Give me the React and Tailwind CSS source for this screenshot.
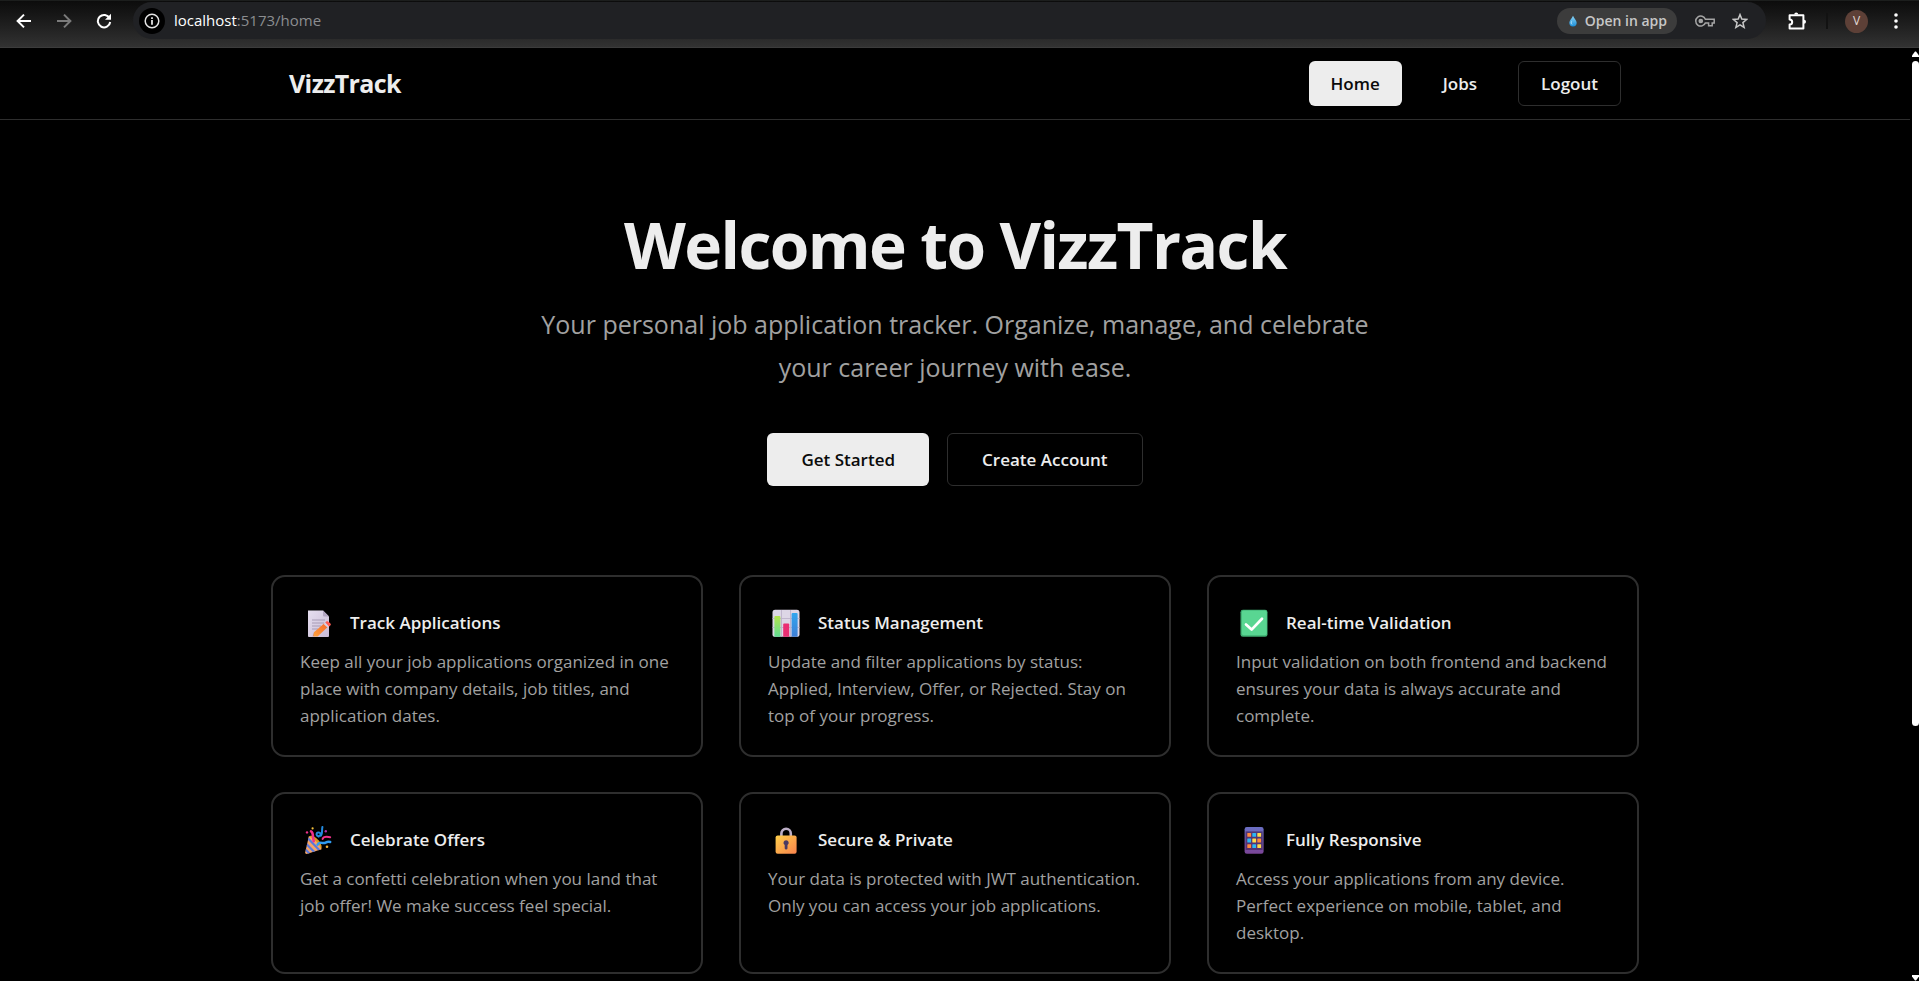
import React from "react";

function ArrowIcon({ className }) {
  return (
    <svg viewBox="0 0 16 16" className={className} fill="none" stroke="currentColor" strokeWidth="2" aria-hidden="true">
      <path d="M15 8H2M8 1.6 1.6 8 8 14.4" />
    </svg>
  );
}

function ReloadIcon() {
  return (
    <svg viewBox="0 0 16 16" className="size-4" aria-hidden="true">
      <path d="M13.6 5.4A6.2 6.2 0 1 0 14.2 9" fill="none" stroke="currentColor" strokeWidth="2" />
      <path d="M15 .8v6H9z" fill="currentColor" />
    </svg>
  );
}

function InfoIcon() {
  return (
    <svg viewBox="0 0 16 16" className="size-4" aria-hidden="true">
      <circle cx="8" cy="8" r="6.8" fill="none" stroke="currentColor" strokeWidth="1.5" />
      <path d="M7.1 7h1.8v4.8H7.1zM7.1 4.2h1.8V6H7.1z" fill="currentColor" />
    </svg>
  );
}

function DropIcon() {
  return (
    <svg viewBox="0 0 10 14" className="h-3 w-2" aria-hidden="true">
      <defs>
        <linearGradient id="drop" x1="0" y1="0" x2="0" y2="1">
          <stop offset="0" stopColor="#8fd6f7" />
          <stop offset="1" stopColor="#1b8fd8" />
        </linearGradient>
      </defs>
      <path d="M5 .3C6 3 9.6 6 9.6 9.2A4.6 4.6 0 0 1 .4 9.2C.4 6 4 3 5 .3z" fill="url(#drop)" />
      <path d="M3.2 7.5c-.8 1.6-.4 3 .6 3.8" stroke="#d6f1ff" fill="none" />
    </svg>
  );
}

function KeyIcon() {
  return (
    <svg viewBox="0 0 20 12" className="h-3 w-5" fill="none" stroke="currentColor" strokeWidth="1.5" aria-hidden="true">
      <path d="M10.4 4.2A5 5 0 1 0 10.4 7.9H13.6V10.8H17.2V7.9H19.2V4.2z" />
      <circle cx="5.8" cy="6" r="1.6" fill="currentColor" />
    </svg>
  );
}

function StarIcon() {
  return (
    <svg viewBox="0 0 16 16" className="size-4" fill="none" stroke="currentColor" strokeWidth="1.5" aria-hidden="true">
      <path d="M8 1.6l1.8 4.5 4.8.4-3.7 3.1 1.2 4.8L8 11.8l-4.1 2.6 1.2-4.8L1.4 6.5l4.8-.4z" />
    </svg>
  );
}

function PuzzleIcon() {
  return (
    <svg viewBox="0 0 18 18" className="size-[18px]" aria-hidden="true">
      <path
        d="M1.6 3.2H15.4V16.6H1.6V12.6A2.4 2.4 0 0 0 1.6 7.4z"
        fill="none"
        stroke="currentColor"
        strokeWidth="2"
        strokeLinejoin="round"
      />
      <path d="M6.2 2.6a2 2 0 0 1 4 0zM16 7.8a2 2 0 0 1 0 4z" fill="currentColor" />
    </svg>
  );
}

function DotsIcon() {
  return (
    <svg viewBox="0 0 4 16" className="h-4 w-1" fill="currentColor" aria-hidden="true">
      <circle cx="2" cy="2" r="1.8" />
      <circle cx="2" cy="8" r="1.8" />
      <circle cx="2" cy="14" r="1.8" />
    </svg>
  );
}

function MemoIcon() {
  return (
    <svg viewBox="0 0 28 28" className="size-7" aria-hidden="true">
      <defs>
        <linearGradient id="memo" x1="0" y1="0" x2="1" y2="1">
          <stop offset="0" stopColor="#e6dff0" />
          <stop offset="1" stopColor="#c9bbd6" />
        </linearGradient>
        <linearGradient id="pencil" x1="0" y1="1" x2="1" y2="0">
          <stop offset="0" stopColor="#ffa23c" />
          <stop offset="1" stopColor="#f4672c" />
        </linearGradient>
      </defs>
      <path d="M4 1.5h15l6 6V27a.9.9 0 0 1-.9.9H4.9A.9.9 0 0 1 4 27z" fill="url(#memo)" />
      <path d="M19 1.5l6 6h-5a1 1 0 0 1-1-1z" fill="#b3a6c2" />
      <path d="M8 11h13M8 14h12M8 17h9M8 20h6" stroke="#a79bb5" strokeWidth="1.1" />
      <path d="M8.6 27.6l1.4-4.4 3.2 3.3z" fill="#c98a7c" />
      <path d="M10 23.2L20.6 14l3.6 3.6L13.6 27.4l-4 .2z" fill="url(#pencil)" />
      <path d="M19.6 14.9l1.8-1.6 3.8 3.6-1.8 1.7z" fill="#d9cfe4" />
      <path d="M21.2 13.4l1.4-1.1c1-.8 4.9 2.4 4.2 3.7l-1.6 1.4z" fill="#ff5b53" />
    </svg>
  );
}

function ChartIcon() {
  return (
    <svg viewBox="0 0 28 28" className="size-7" aria-hidden="true">
      <defs>
        <linearGradient id="bar-green" x1="0" y1="0" x2="0" y2="1">
          <stop offset="0" stopColor="#b4e34d" />
          <stop offset="1" stopColor="#5fdd92" />
        </linearGradient>
        <linearGradient id="bar-blue" x1="0" y1="0" x2="0" y2="1">
          <stop offset="0" stopColor="#31a6ee" />
          <stop offset="1" stopColor="#3f7fd6" />
        </linearGradient>
      </defs>
      <rect x=".5" y=".8" width="27" height="27" rx="2.6" fill="#ddd6e6" />
      <path d="M9.5 1v26.5M18.5 1v26.5M.5 9.5h27M.5 18.5h27" stroke="#bcb2c9" strokeWidth=".9" />
      <path d="M2.4 8a1 1 0 0 1 1-1h4a1 1 0 0 1 1 1v19.8H3.1a1 1 0 0 1-.7-.7z" fill="url(#bar-green)" />
      <path d="M11.2 15.5a1 1 0 0 1 1-1h4a1 1 0 0 1 1 1v12.3h-6z" fill="#ea2e73" />
      <path d="M19.6 5a1 1 0 0 1 1-1h4a1 1 0 0 1 1 1v22.4l-.9.4h-5.1z" fill="url(#bar-blue)" />
    </svg>
  );
}

function CheckIcon() {
  return (
    <svg viewBox="0 0 28 28" className="size-7" aria-hidden="true">
      <rect x=".5" y=".8" width="27" height="27" rx="2.4" fill="#3fae72" />
      <rect x="1.8" y="1.6" width="25" height="24.6" rx="1.8" fill="#59d692" />
      <path d="M6 15.4l5.6 5.2L22 9.8" fill="none" stroke="#fff" strokeWidth="2.7" strokeLinecap="round" strokeLinejoin="round" />
    </svg>
  );
}

function PartyIcon() {
  return (
    <svg viewBox="0 0 28 28" className="size-7" aria-hidden="true">
      <defs>
        <clipPath id="cone">
          <path d="M4.8 10.6c5 1.6 9.6 6 12.6 12.6L3.6 27.8c-2 .6-3-.6-2.2-2.4z" />
        </clipPath>
      </defs>
      <path d="M4.8 10.6c3.6-3.6 15 6 12.6 12.6-3 1.8-12.6-7-12.6-12.6z" fill="#d9981f" />
      <g clipPath="url(#cone)">
        <path d="M0 9h20v20H0z" fill="#f5a566" />
        <path d="M3.4 11.8l13 13.4M2 17.4l10 10.4M1 23l5 5" stroke="#5a78dc" strokeWidth="2.2" />
      </g>
      <path d="M7 5.4c3 1.4 1.2 5.4 2.8 9.8" fill="none" stroke="#f0318a" strokeWidth="2.5" strokeLinecap="round" />
      <path d="M14.6 10.6c-3.2-1-2.4-5 .8-4 2 .8 1 3.6-.4 3.4M16.8 9.6c2-1.6.8-5.4 1.6-8.6" fill="none" stroke="#2289dd" strokeWidth="2" strokeLinecap="round" />
      <path d="M13.6 18.6c2-4 5-.2 8-2 1.8-1 3.2-1 4.6-.6" fill="none" stroke="#2f9bf0" strokeWidth="2.5" strokeLinecap="round" />
      <path d="M18.6 13c.6-2.4 3-2.6 7.6-1.8" fill="none" stroke="#f0318a" strokeWidth="2" strokeLinecap="round" />
      <circle cx="8.6" cy="2.4" r="1.1" fill="#f7c23c" />
      <circle cx="3" cy="6.4" r="1.2" fill="#f0318a" />
      <circle cx="21.8" cy="5.2" r="1.2" fill="#b02fa8" />
      <circle cx="23" cy="20.8" r="1.3" fill="#f0b13c" />
    </svg>
  );
}

function LockIcon() {
  return (
    <svg viewBox="0 0 28 28" className="size-7" aria-hidden="true">
      <defs>
        <linearGradient id="lock" x1="0" y1="0" x2="1" y2="1">
          <stop offset="0" stopColor="#ffcf4a" />
          <stop offset="1" stopColor="#f8824c" />
        </linearGradient>
      </defs>
      <path d="M9.4 11V7.4a4.7 4.7 0 0 1 9.4 0V11" fill="none" stroke="#bcaec6" strokeWidth="2.6" />
      <rect x="3.6" y="9.6" width="21" height="18.2" rx="2" fill="url(#lock)" />
      <path d="M14.1 14.2a2.6 2.6 0 0 1 1.4 4.8v3.2a1.4 1.4 0 0 1-2.8 0V19a2.6 2.6 0 0 1 1.4-4.8z" fill="#4a3a63" />
    </svg>
  );
}

const appTiles = [
  [8.2, 8, "#ff8a3c"], [13.2, 8, "#2cb7f5"], [18.2, 8, "#ffd94a"],
  [8.2, 13.6, "#2cb7f5"], [13.2, 13.6, "#ffd94a"], [18.2, 13.6, "#ff8a3c"],
  [8.2, 19.2, "#ff8a3c"], [13.2, 19.2, "#2cb7f5"], [18.2, 19.2, "#ffd94a"],
];

function PhoneIcon() {
  return (
    <svg viewBox="0 0 28 28" className="size-7" aria-hidden="true">
      <defs>
        <linearGradient id="phone" x1="0" y1="0" x2="0" y2="1">
          <stop offset="0" stopColor="#6b6fc4" />
          <stop offset="1" stopColor="#7a4597" />
        </linearGradient>
        <linearGradient id="screen" x1="1" y1="0" x2="0" y2="1">
          <stop offset="0" stopColor="#4b3a78" />
          <stop offset="1" stopColor="#5a2f6e" />
        </linearGradient>
      </defs>
      <rect x="4.6" y="1" width="19" height="26.8" rx="2.2" fill="url(#phone)" />
      <rect x="5.6" y="5.4" width="17" height="18.6" fill="url(#screen)" />
      {appTiles.map(([x, y, fill]) => (
        <rect key={`${x}-${y}`} x={x - 0.9} y={y - 1} width="3.8" height="3.8" rx=".5" fill={fill} />
      ))}
    </svg>
  );
}

const features = [
  {
    title: "Track Applications",
    Icon: MemoIcon,
    text: "Keep all your job applications organized in one place with company details, job titles, and application dates.",
  },
  {
    title: "Status Management",
    Icon: ChartIcon,
    text: "Update and filter applications by status: Applied, Interview, Offer, or Rejected. Stay on top of your progress.",
  },
  {
    title: "Real-time Validation",
    Icon: CheckIcon,
    text: "Input validation on both frontend and backend ensures your data is always accurate and complete.",
  },
  {
    title: "Celebrate Offers",
    Icon: PartyIcon,
    text: "Get a confetti celebration when you land that job offer! We make success feel special.",
  },
  {
    title: "Secure & Private",
    Icon: LockIcon,
    text: "Your data is protected with JWT authentication. Only you can access your job applications.",
  },
  {
    title: "Fully Responsive",
    Icon: PhoneIcon,
    text: "Access your applications from any device. Perfect experience on mobile, tablet, and desktop.",
  },
];

function BrowserBar() {
  return (
    <div className="flex h-12 shrink-0 items-start border-t border-b border-t-[#1c1e1d] border-b-[#3c3c3c] bg-linear-to-b from-[#0c0c0c] to-[#323232] pt-px">
      <div className="flex h-[38px] w-[133px] shrink-0 items-center gap-6 pl-4 text-white">
        <button type="button" aria-label="Back">
          <ArrowIcon className="size-4" />
        </button>
        <button type="button" aria-label="Forward" className="text-[#7b7b7b]">
          <ArrowIcon className="size-4 rotate-180" />
        </button>
        <button type="button" aria-label="Reload">
          <ReloadIcon />
        </button>
      </div>
      <div className="flex h-[37px] min-w-0 grow items-center rounded-full bg-[#202124] pr-[18px] pl-[6px]">
        <button type="button" aria-label="Site information" className="flex size-[26px] items-center justify-center rounded-full bg-black text-[#e3e3e3]">
          <InfoIcon />
        </button>
        <label htmlFor="address" className="pl-[9px] text-[15px] text-white">
          localhost
        </label>
        <input
          id="address"
          type="text"
          defaultValue=":5173/home"
          className="min-w-0 grow bg-transparent text-[15px] text-[#8b8d90] outline-none"
        />
        <button type="button" className="flex h-[26px] items-center gap-2 rounded-full bg-[#3c3c3c] pr-[10px] pl-3 text-sm font-semibold text-[#c7c7c7]">
          <DropIcon />
          Open in app
        </button>
        <button type="button" aria-label="Passwords" className="ml-[18px] text-[#a5a5a5]">
          <KeyIcon />
        </button>
        <button type="button" aria-label="Bookmark this page" className="ml-[17px] text-[#c7c7c7]">
          <StarIcon />
        </button>
      </div>
      <div className="flex h-[38px] w-[153px] shrink-0 items-center pl-[22px] text-white">
        <button type="button" aria-label="Extensions">
          <PuzzleIcon />
        </button>
        <span className="ml-5 h-4 w-0.5 bg-[#121212]" />
        <button type="button" aria-label="Profile" className="ml-[17px] flex size-[23px] items-center justify-center rounded-full bg-[#5d4037] text-xs text-[#e0d8d5]">
          V
        </button>
        <button type="button" aria-label="Menu" className="ml-[26px]">
          <DotsIcon />
        </button>
      </div>
    </div>
  );
}

function ScrollBar() {
  return (
    <div aria-hidden="true" className="flex w-[7px] shrink-0 flex-col items-center pt-[3px] text-white">
      <svg viewBox="0 0 7 6" className="h-1.5 w-[7px]" fill="currentColor">
        <path d="M0 6V4.6L3 .4h1L7 4.6V6z" />
      </svg>
      <div className="mt-1 h-[71.5%] w-full rounded-full bg-white" />
      <div className="grow" />
      <svg viewBox="0 0 7 6" className="h-1.5 w-[7px]" fill="currentColor">
        <path d="M0 0v1.4L3 5.6h1L7 1.4V0z" />
      </svg>
    </div>
  );
}

function FeatureCard({ title, Icon, text }) {
  return (
    <article className="rounded-[14px] border-2 border-[#2e2e2e] px-[27px] pt-7 pb-[26px]">
      <div className="flex h-9 items-center gap-[14px]">
        <span className="flex w-9 justify-center">
          <Icon />
        </span>
        <h2 className="text-[17px] font-semibold text-[#ededed]">{title}</h2>
      </div>
      <p className="mt-[7px] text-[17px] leading-[27px] text-[#a1a1a1]">{text}</p>
    </article>
  );
}

export default function App() {
  return (
    <div className="flex h-screen flex-col overflow-hidden bg-black font-['Open_Sans','Noto_Sans',sans-serif] text-[#ededed]">
      <BrowserBar />
      <div className="flex min-h-0 grow">
        <div className="min-w-0 grow overflow-hidden pr-0.5">
          <header className="border-b border-[#2e2e2e]">
            <div className="mx-auto flex h-[71px] max-w-[1368px] items-center justify-between px-[18px]">
              <a href="#home" className="text-[25px] font-bold tracking-tight">
                VizzTrack
              </a>
              <nav className="flex items-center gap-[19px] text-[17px] font-semibold">
                <a href="#home" className="flex h-[45px] items-center rounded-md bg-[#ededed] px-[22px] text-[#0a0a0a]">
                  Home
                </a>
                <a href="#jobs" className="flex h-[45px] items-center px-[22px]">
                  Jobs
                </a>
                <button type="button" className="h-[45px] rounded-md border border-[#2e2e2e] px-[22px]">
                  Logout
                </button>
              </nav>
            </div>
          </header>
          <main className="mx-auto max-w-[1368px]">
            <section className="flex flex-col items-center pt-[89px] text-center">
              <h1 className="text-[64px] leading-[72px] font-bold tracking-tight">Welcome to VizzTrack</h1>
              <p className="mt-[22px] max-w-[864px] text-[25px] leading-[43px] text-[#a1a1a1]">
                Your personal job application tracker. Organize, manage, and celebrate your career journey with ease.
              </p>
              <div className="mt-11 flex gap-[18px] text-[17px] font-semibold">
                <button type="button" className="h-[53px] rounded-md bg-[#ededed] px-[34px] text-[#0a0a0a]">
                  Get Started
                </button>
                <button type="button" className="h-[53px] rounded-md border border-[#2e2e2e] px-[34px]">
                  Create Account
                </button>
              </div>
            </section>
            <section className="mt-[89px] grid grid-cols-3 gap-x-9 gap-y-[35px]">
              {features.map((feature) => (
                <FeatureCard key={feature.title} {...feature} />
              ))}
            </section>
          </main>
        </div>
        <ScrollBar />
      </div>
    </div>
  );
}
